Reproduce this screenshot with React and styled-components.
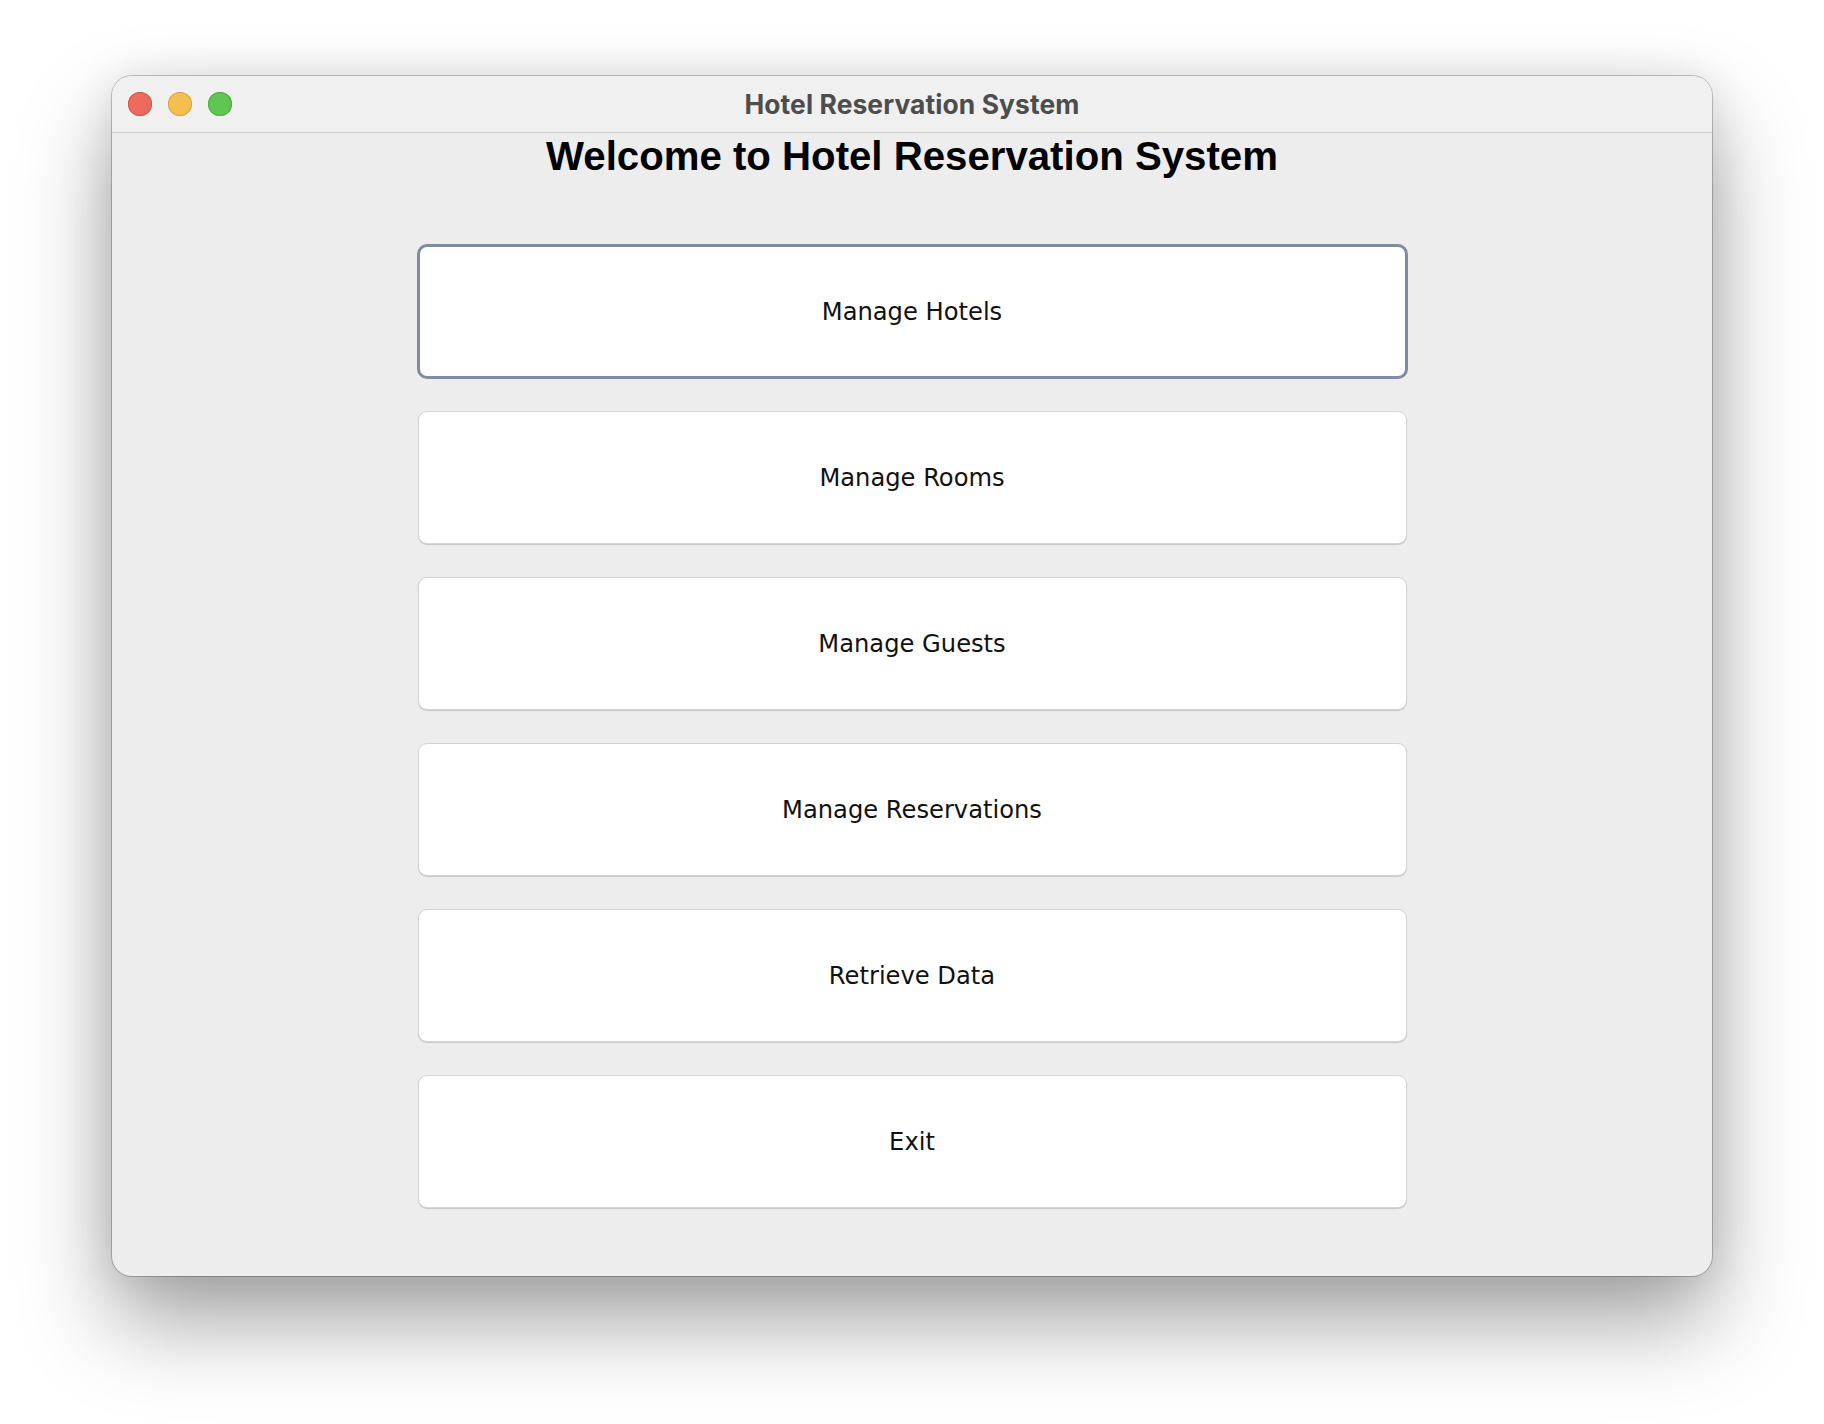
import React from 'react';
import styled, { createGlobalStyle } from 'styled-components';

const GlobalStyle = createGlobalStyle`
  html, body {
    margin: 0;
    padding: 0;
    background: #ffffff;
  }
  * {
    box-sizing: border-box;
  }
`;

const Desktop = styled.div`
  width: 1824px;
  height: 1424px;
  display: flex;
  justify-content: center;
  align-items: flex-start;
  padding-top: 76px;
  background: #ffffff;
`;

const Window = styled.div`
  width: 1600px;
  height: 1200px;
  display: flex;
  flex-direction: column;
  border-radius: 20px;
  overflow: hidden;
  background: #ededed;
  box-shadow: 0 0 0 1px rgba(0, 0, 0, 0.22), 0 46px 90px rgba(0, 0, 0, 0.36),
    0 0 44px rgba(0, 0, 0, 0.1);
`;

const TitleBar = styled.div`
  height: 57px;
  flex-shrink: 0;
  position: relative;
  display: flex;
  align-items: center;
  justify-content: center;
  background: #f1f0f0;
  border-bottom: 1px solid #cfcfcf;
`;

const Lights = styled.div`
  position: absolute;
  left: 16px;
  top: 16px;
  display: flex;
  gap: 16px;
`;

const Light = styled.span`
  width: 24px;
  height: 24px;
  border-radius: 50%;
  background: ${({ color }) => color};
  box-shadow: inset 0 0 0 1px ${({ edge }) => edge};
`;

const WindowTitle = styled.div`
  font-family: Inter, 'Liberation Sans', sans-serif;
  font-weight: 700;
  font-size: 26.4px;
  color: #4d4d4d;
  letter-spacing: 0.1px;
`;

const Content = styled.div`
  flex: 1;
  display: flex;
  flex-direction: column;
  align-items: center;
  padding-top: 1px;
`;

const Heading = styled.h1`
  margin: 0;
  font-family: 'Liberation Sans', Arial, sans-serif;
  font-weight: 700;
  font-size: 40.2px;
  line-height: 46px;
  color: #000000;
`;

const Menu = styled.div`
  margin-top: 65px;
  width: 989px;
  display: flex;
  flex-direction: column;
  gap: 33px;
`;

const MenuButton = styled.button`
  height: 133px;
  width: 100%;
  display: flex;
  align-items: center;
  justify-content: center;
  background: #ffffff;
  border-radius: 9px;
  border: ${({ focused }) => (focused ? '2px solid #7d8ca4' : '1px solid #d4d4d4')};
  box-shadow: ${({ focused }) =>
    focused ? '0 0 0 1px #7d8ca4' : '0 1px 1px rgba(0, 0, 0, 0.16)'};
  font-family: 'DejaVu Sans', Verdana, sans-serif;
  font-size: 24.2px;
  color: #111111;
  padding: 0;
  cursor: pointer;
`;

const items = [
  'Manage Hotels',
  'Manage Rooms',
  'Manage Guests',
  'Manage Reservations',
  'Retrieve Data',
  'Exit'
];

const App = () => (
  <>
    <GlobalStyle />
    <Desktop>
      <Window>
        <TitleBar>
          <Lights>
            <Light color="#ec6a5e" edge="#d2554a" />
            <Light color="#f4bf4f" edge="#d9a23f" />
            <Light color="#61c554" edge="#4fa943" />
          </Lights>
          <WindowTitle>Hotel Reservation System</WindowTitle>
        </TitleBar>
        <Content>
          <Heading>Welcome to Hotel Reservation System</Heading>
          <Menu>
            {items.map((label, i) => (
              <MenuButton key={label} focused={i === 0}>
                {label}
              </MenuButton>
            ))}
          </Menu>
        </Content>
      </Window>
    </Desktop>
  </>
);

export default App;
